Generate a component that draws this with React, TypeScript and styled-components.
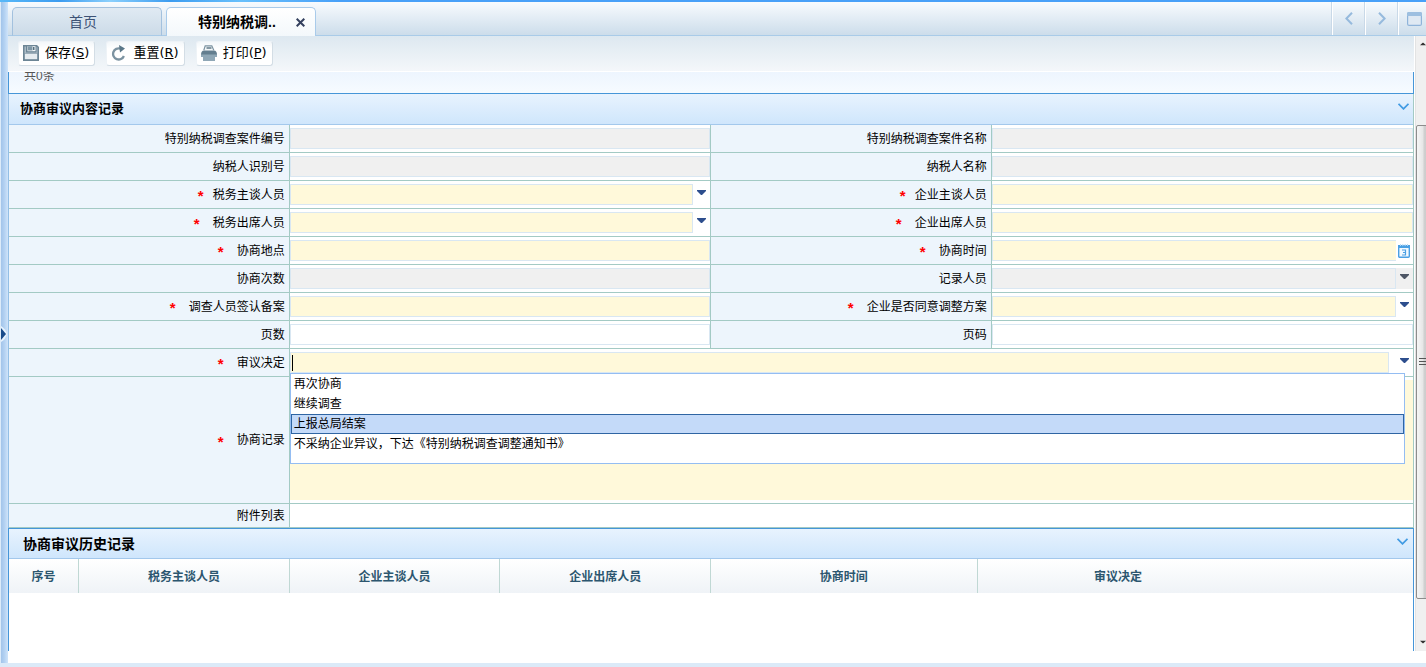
import React, { useState } from "react";
import styled, { createGlobalStyle, css } from "styled-components";

const GlobalStyle = createGlobalStyle`
  *, *::before, *::after { box-sizing: border-box; }
  body {
    margin: 0;
    background: #fff;
    color: #000;
    font: 12px/20px "Liberation Sans", "Noto Sans CJK SC", sans-serif;
  }
  button, input, select, textarea { font: inherit; color: inherit; margin: 0; padding: 0; }
`;

const line = "#a3cac4";
const blue = "#4696d8";

const Shell = styled.div`
  display: flex;
  flex-direction: column;
  min-height: 100vh;
  overflow: hidden;
`;

const TopStrip = styled.div`
  height: 2px;
  flex: none;
  background: linear-gradient(90deg, #58b8f8 0, #3c9cf0 60px, #8cd0fc 110px, #3c9cf0 170px, #68c0fc 240px, #48a0f8 340px, #48a0f8 100%);
`;

const Middle = styled.div`
  display: flex;
  flex: 1;
`;

const Splitter = styled.div`
  display: flex;
  align-items: center;
  width: 8px;
  flex: none;
  padding-top: 2px;
  border-left: 1px solid #dcebf9;
  background: linear-gradient(90deg, #a2c4ea, #b4d2f2 50%, #cfe4fa);
`;

const SplitterHandle = styled.button`
  display: flex;
  width: 6px;
  height: 16px;
  border: 0;
  background: none;
`;

const Main = styled.div`
  flex: 1;
  min-width: 0;
  display: flex;
  flex-direction: column;
`;

const TabBar = styled.header`
  display: flex;
  justify-content: space-between;
  height: 34px;
  background: linear-gradient(#f8fbfe, #cbdcea);
  box-shadow: inset 0 -1px #a9cbe8;
`;

const Tabs = styled.nav`
  display: flex;
  gap: 4px;
  padding: 5px 0 0 4px;
`;

const Tab = styled.div<{ $active?: boolean }>`
  display: flex;
  align-items: center;
  justify-content: space-between;
  width: 150px;
  height: 29px;
  padding: 0 10px 0 ${(p) => (p.$active ? 31 : 56)}px;
  border: 1px solid ${(p) => (p.$active ? "#a9cbea" : "#a3c1de")};
  border-bottom: ${(p) => (p.$active ? "0" : "1px solid #a9cbe8")};
  border-radius: 5px 5px 0 0;
  background: ${(p) => (p.$active ? "linear-gradient(#fff, #f3f8fb)" : "linear-gradient(#e0eaf3, #ccdbe8)")};
`;

const TabLink = styled.a<{ $active?: boolean }>`
  font-size: 14px;
  font-weight: ${(p) => (p.$active ? 700 : 400)};
  color: ${(p) => (p.$active ? "#000" : "#3d5275")};
  text-decoration: none;
  white-space: nowrap;
`;

const IconButton = styled.button`
  display: flex;
  border: 0;
  background: none;
`;

const TabNav = styled.div`
  display: flex;
`;

const NavButton = styled.button<{ $last?: boolean }>`
  display: flex;
  align-items: center;
  padding-left: ${(p) => (p.$last ? 8 : 12)}px;
  width: ${(p) => (p.$last ? 28 : 33)}px;
  height: 33px;
  border: 0;
  border-left: 1px solid #fff;
  background: none;
  box-shadow: -1px 0 #c9d9e8;
`;

const Workspace = styled.div`
  display: flex;
  flex: 1;
  padding-bottom: 12px;
`;

const Content = styled.main`
  flex: 1;
  min-width: 0;
  margin-right: 1px;
  display: flex;
  flex-direction: column;
`;

const Toolbar = styled.div`
  display: flex;
  align-items: flex-start;
  gap: 11px;
  height: 36px;
  padding: 5px 10px 0;
  border-bottom: 1px solid #fff;
  background: linear-gradient(#dde8f0, #f4f7fa);
`;

const ToolButton = styled.button`
  display: flex;
  align-items: center;
  gap: 6px;
  height: 25px;
  padding: 0 5px 1px 4px;
  border: 1px solid #eef3f7;
  border-right-color: #d3dde5;
  border-bottom-color: #d3dde5;
  border-radius: 3px;
  background: linear-gradient(#f3f7fa, #fff 30%);
  font: 13px/20px "DejaVu Sans", "Noto Sans CJK SC", sans-serif;
  white-space: nowrap;
`;

const Pager = styled.div`
  height: 22px;
  overflow: hidden;
  padding-left: 15px;
  border: solid ${blue};
  border-width: 0 1px 1px;
  background: linear-gradient(#edf5fe, #f7fbff);
  color: #555;
  line-height: 8px;
`;

const Panel = styled.section<{ $grow?: boolean }>`
  border: solid ${(p) => (p.$grow ? blue : line)};
  border-width: ${(p) => (p.$grow ? "1px 1px 0" : "0 1px")};
  border-left-color: ${(p) => (p.$grow ? blue : "#93bfe6")};
  ${(p) => p.$grow && css`flex: 1; min-height: 123px;`}
`;

const PanelHead = styled.div<{ $history?: boolean }>`
  display: flex;
  align-items: center;
  justify-content: space-between;
  height: ${(p) => (p.$history ? 30 : 31)}px;
  padding: 0 ${(p) => (p.$history ? "5px 0 14px" : "4px 0 11px")};
  border-bottom: 1px solid #a3c8ec;
  background: linear-gradient(#e8f3fe, #cfe6fc);
`;

const PanelTitle = styled.h2<{ $large?: boolean }>`
  margin: 0;
  font-size: ${(p) => (p.$large ? 14 : 13)}px;
  line-height: 20px;
`;

const CollapseButton = styled(IconButton)`
  padding-bottom: 5px;
`;

const Row = styled.div<{ $wide?: boolean; $size?: "tall" | "short" }>`
  display: grid;
  grid-template-columns: ${(p) => (p.$wide ? "20% 80%" : "20% 30% 20% 30%")};
  grid-template-rows: 100%;
  height: ${(p) => (p.$size === "tall" ? 127 : p.$size === "short" ? 24 : 28)}px;
  border-bottom: 1px solid ${line};
`;

const LabelCell = styled.label`
  display: flex;
  align-items: center;
  justify-content: flex-end;
  padding-right: 4px;
  border-right: 1px solid ${line};
  background: #edf5fc;
  white-space: nowrap;
`;

const Star = styled.span<{ $tight?: boolean }>`
  width: 7px;
  margin-right: ${(p) => (p.$tight ? 8 : 12)}px;
  padding-top: 3px;
  color: #f00;
  font: 700 15px/16px "Liberation Sans", sans-serif;
`;

const FieldCell = styled.div<{ $divider?: boolean }>`
  position: relative;
  display: flex;
  min-width: 0;
  padding: 3px 0;
  border-right: ${(p) => (p.$divider ? `1px solid ${line}` : "0")};
`;

type Tone = "gray" | "yellow" | "white";
const tones: Record<Tone, string> = { gray: "#f0f0f0", yellow: "#fff9da", white: "#fff" };

const box = css<{ $tone: Tone }>`
  flex: 1;
  min-width: 0;
  border: 1px solid #d9e7f2;
  border-radius: 0;
  outline: 0;
  background: ${(p) => tones[p.$tone]};
  line-height: 18px;
  appearance: none;
`;

const TextBox = styled.input<{ $tone: Tone; $open?: boolean }>`
  ${box}
  border-right-width: ${(p) => (p.$open ? 0 : 1)}px;
`;
const SelectBox = styled.select<{ $tone: Tone }>`
  ${box}
  opacity: 1;
`;
const NoteBox = styled.textarea`
  flex: 1;
  min-width: 0;
  border: 0;
  outline: 0;
  resize: none;
  background: ${tones.yellow};
`;

const Trigger = styled.span<{ $tone?: Tone; $wide?: boolean }>`
  display: flex;
  justify-content: flex-end;
  width: ${(p) => (p.$wide ? 24 : 17)}px;
  padding: 6px 4px 0 0;
  background: ${(p) => (p.$tone === "gray" ? tones.gray : "none")};
`;

const DateButton = styled(IconButton)`
  width: 17px;
  padding: 4px 0 0 2px;
`;

const Caret = styled.span`
  position: absolute;
  left: 2px;
  top: 6px;
  width: 1px;
  height: 16px;
  background: #000;
`;

const Options = styled.ul`
  position: absolute;
  z-index: 2;
  left: 0;
  right: 8px;
  top: 24px;
  margin: 0;
  padding: 0 0 9px;
  border: 1px solid #94bdf2;
  background: #fff;
  list-style: none;
`;

const Option = styled.li<{ $on: boolean }>`
  height: 20px;
  padding: 0 2px;
  border: 1px solid ${(p) => (p.$on ? "#2f65a3" : "transparent")};
  background: ${(p) => (p.$on ? "#c4daf9" : "#fff")};
  line-height: 18px;
`;

const History = styled.table`
  width: 100%;
  border-collapse: separate;
  border-spacing: 0;
  table-layout: fixed;
  background: linear-gradient(#fff, #eff3f7);
`;

const Th = styled.th<{ $w: number }>`
  width: ${(p) => p.$w}%;
  height: 34px;
  padding: 2px 0 0;
  border-right: 1px solid #c0d8d4;
  color: #2c566f;
  &:nth-last-child(2) { border-right: 0; }
`;

const Filler = styled.td`
  padding: 0;
`;

const Rail = styled.aside`
  display: flex;
  flex-direction: column;
  flex: none;
  width: 11px;
  overflow: hidden;
  border-left: 1px solid #e3e3e3;
  background: #f0f0f0;
`;

const RailGap = styled.div<{ $share: number }>`
  flex: ${(p) => p.$share} 0 0;
`;

const RailButton = styled(IconButton)`
  height: 17px;
  padding: 6px 0 0 4px;
`;

const Thumb = styled.div`
  display: flex;
  align-items: center;
  flex: 474 0 0;
  width: 17px;
  padding-left: 2px;
  border: 1px solid #8c8c8c;
  border-radius: 2px;
  background: linear-gradient(90deg, #f6f6f6 0, #e6e6e6 6px, #d0d0d0 7px, #c4c4c4 100%);
`;

const BottomStrip = styled.div`
  height: 4px;
  flex: none;
  background: #dbeaf8;
`;

const Down = ({ dim }: { dim?: boolean }) => (
  <svg width="9" height="5" viewBox="0 0 9 5" aria-hidden="true">
    <path d="M0 0H9V1L5 5H4L0 1Z" fill={dim ? "#4e5665" : "#2d4e8d"} />
  </svg>
);

const Collapse = ({ label }: { label: string }) => (
  <CollapseButton aria-label={label}>
    <svg width="11" height="7" viewBox="0 0 11 7" fill="none" stroke="#419be3" strokeWidth="1.8">
      <path d="M0.5 0.8L5.5 5.8L10.5 0.8" />
    </svg>
  </CollapseButton>
);

const SaveIcon = () => (
  <svg width="16" height="16" viewBox="0 0 16 16" aria-hidden="true">
    <path d="M0 0H14L16 2V16H0Z" fill="#6c8595" />
    <path d="M1.5 1.5H3V7.5H13.5V1.5L14.5 2.5V8.5H1.5Z" fill="#a9bac5" />
    <path d="M4.5 1.2H12.5V6.2H4.5Z" fill="#f4f7f9" />
    <path d="M5 1.2H9.5V5.5H5Z" fill="#7f97a6" />
    <path d="M10 2H11.5V5H10Z" fill="#56707f" />
    <path d="M1.8 8.8H14.2V14.2H1.8Z" fill="#e6ecf0" />
  </svg>
);

const ResetIcon = () => (
  <svg width="16" height="16" viewBox="0 0 16 16" aria-hidden="true">
    <path d="M9.5 3.6A5.6 5.6 0 1 0 12.9 11" fill="none" stroke="#7c93a1" strokeWidth="2.3" />
    <path d="M8 0L14 3.6L9 7.4Z" fill="#5a7788" />
  </svg>
);

const PrintIcon = () => (
  <svg width="16" height="16" viewBox="0 0 16 16" aria-hidden="true">
    <path d="M2.8 5.2L4.2 0.8H10.8L12.8 5.2" fill="#f2f6f8" stroke="#7c93a1" strokeWidth="1.2" />
    <path d="M5.5 3H10.5" stroke="#56707f" strokeWidth="1.4" />
    <path d="M0 10Q0 5.5 3 5.5H13Q16 5.5 16 10Z" fill="#637e8f" />
    <path d="M0 9.5H16V12H14V16H2V12H0Z" fill="#8fa7b6" />
  </svg>
);

const CalendarIcon = () => (
  <svg width="12" height="14" viewBox="0 0 12 14" aria-hidden="true">
    <rect x="0.7" y="1.7" width="10.6" height="11.6" rx="1" fill="#f2f9ff" stroke="#4aa0e4" strokeWidth="1.4" />
    <path d="M0 1H12V4H0Z" fill="#4aa0e4" />
    <path d="M2.5 0V2M4.8 0V2M7.2 0V2M9.5 0V2" stroke="#b8daf5" />
    <path d="M4 6H7.5V11H4M5 8.5H7.5" fill="none" stroke="#4aa0e4" strokeWidth="1.2" />
  </svg>
);

type Kind = "text" | "select" | "date";
interface Field {
  id: string;
  label: string;
  tone: Tone;
  kind?: Kind;
  star?: "tight" | "loose";
}

const rows: [Field, Field][] = [
  [{ id: "caseNo", label: "特别纳税调查案件编号", tone: "gray" }, { id: "caseName", label: "特别纳税调查案件名称", tone: "gray" }],
  [{ id: "taxNo", label: "纳税人识别号", tone: "gray" }, { id: "taxName", label: "纳税人名称", tone: "gray" }],
  [
    { id: "taxLead", label: "税务主谈人员", tone: "yellow", kind: "select", star: "tight" },
    { id: "firmLead", label: "企业主谈人员", tone: "yellow", star: "tight" },
  ],
  [
    { id: "taxStaff", label: "税务出席人员", tone: "yellow", kind: "select", star: "loose" },
    { id: "firmStaff", label: "企业出席人员", tone: "yellow", star: "loose" },
  ],
  [
    { id: "place", label: "协商地点", tone: "yellow", star: "loose" },
    { id: "time", label: "协商时间", tone: "yellow", kind: "date", star: "loose" },
  ],
  [{ id: "count", label: "协商次数", tone: "gray" }, { id: "recorder", label: "记录人员", tone: "gray", kind: "select" }],
  [
    { id: "signed", label: "调查人员签认备案", tone: "yellow", star: "loose" },
    { id: "agreed", label: "企业是否同意调整方案", tone: "yellow", kind: "select", star: "loose" },
  ],
  [{ id: "pages", label: "页数", tone: "white" }, { id: "pageNo", label: "页码", tone: "white" }],
];

const decisions = ["再次协商", "继续调查", "上报总局结案", "不采纳企业异议，下达《特别纳税调查调整通知书》"];

const columns: [string, number][] = [
  ["序号", 5],
  ["税务主谈人员", 15],
  ["企业主谈人员", 15],
  ["企业出席人员", 15],
  ["协商时间", 19],
  ["审议决定", 20],
];

const FieldPair = ({ field, divider }: { field: Field; divider?: boolean }) => {
  const { id, label, tone, kind = "text", star } = field;
  const locked = tone === "gray";
  return (
    <>
      <LabelCell htmlFor={id}>
        {star && <Star $tight={star === "tight"}>*</Star>}
        {label}
      </LabelCell>
      <FieldCell $divider={divider}>
        {kind === "select" ? (
          <>
            <SelectBox id={id} $tone={tone} disabled={locked} />
            <Trigger $tone={tone}><Down dim={locked} /></Trigger>
          </>
        ) : (
          <TextBox id={id} type="text" $tone={tone} $open={kind === "date"} readOnly={locked} />
        )}
        {kind === "date" && <DateButton aria-label="选择日期"><CalendarIcon /></DateButton>}
      </FieldCell>
    </>
  );
};

export default function App() {
  const [active, setActive] = useState(2);
  const [decision, setDecision] = useState("");

  return (
    <Shell>
      <GlobalStyle />
      <TopStrip />
      <Middle>
        <Splitter>
          <SplitterHandle aria-label="展开侧栏">
            <svg width="6" height="16" viewBox="0 0 6 16">
              <path d="M0 0Q5 3 6 8Q5 13 0 16Z" fill="#e6f2fd" />
              <path d="M0 2L5 8L0 14Z" fill="#174b8b" />
            </svg>
          </SplitterHandle>
        </Splitter>
        <Main>
          <TabBar>
            <Tabs>
              <Tab><TabLink href="#home">首页</TabLink></Tab>
              <Tab $active>
                <TabLink href="#case" $active>特别纳税调..</TabLink>
                <IconButton aria-label="关闭">
                  <svg width="9" height="9" viewBox="0 0 9 9" stroke="#34405e" strokeWidth="2">
                    <path d="M0.7 0.7L8.3 8.3M8.3 0.7L0.7 8.3" />
                  </svg>
                </IconButton>
              </Tab>
            </Tabs>
            <TabNav>
              <NavButton aria-label="向左">
                <svg width="8" height="13" viewBox="0 0 8 13" fill="none" stroke="#96badd" strokeWidth="2">
                  <path d="M7 0.7L1.4 6.5L7 12.3" />
                </svg>
              </NavButton>
              <NavButton aria-label="向右">
                <svg width="8" height="13" viewBox="0 0 8 13" fill="none" stroke="#96badd" strokeWidth="2">
                  <path d="M1 0.7L6.6 6.5L1 12.3" />
                </svg>
              </NavButton>
              <NavButton aria-label="最大化" $last>
                <svg width="15" height="14" viewBox="0 0 15 14">
                  <rect x="0.6" y="0.6" width="13.8" height="12.8" rx="1.5" fill="#dfe9f3" stroke="#8fb4da" strokeWidth="1.2" />
                  <path d="M0 1.5Q0 0 1.5 0H13.5Q15 0 15 1.5V4H0Z" fill="#9dbfe0" />
                </svg>
              </NavButton>
            </TabNav>
          </TabBar>

          <Workspace>
            <Content>
              <Toolbar>
                <ToolButton><SaveIcon /><span>保存(<u>S</u>)</span></ToolButton>
                <ToolButton><ResetIcon /><span>重置(<u>R</u>)</span></ToolButton>
                <ToolButton><PrintIcon /><span>打印(<u>P</u>)</span></ToolButton>
              </Toolbar>
              <Pager>共0条</Pager>

              <Panel>
                <PanelHead>
                  <PanelTitle>协商审议内容记录</PanelTitle>
                  <Collapse label="收起内容记录" />
                </PanelHead>
                {rows.map(([left, right]) => (
                  <Row key={left.id}>
                    <FieldPair field={left} divider />
                    <FieldPair field={right} />
                  </Row>
                ))}
                <Row $wide>
                  <LabelCell htmlFor="decision"><Star>*</Star>审议决定</LabelCell>
                  <FieldCell>
                    <TextBox
                      id="decision"
                      type="text"
                      role="combobox"
                      aria-expanded="true"
                      aria-controls="decisions"
                      $tone="yellow"
                      value={decision}
                      onChange={(e) => setDecision(e.target.value)}
                    />
                    <Caret />
                    <Trigger $wide><Down /></Trigger>
                    <Options id="decisions" role="listbox">
                      {decisions.map((text, i) => (
                        <Option
                          key={text}
                          role="option"
                          aria-selected={i === active}
                          $on={i === active}
                          onMouseEnter={() => setActive(i)}
                          onClick={() => setDecision(text)}
                        >
                          {text}
                        </Option>
                      ))}
                    </Options>
                  </FieldCell>
                </Row>
                <Row $wide $size="tall">
                  <LabelCell htmlFor="note"><Star>*</Star>协商记录</LabelCell>
                  <FieldCell><NoteBox id="note" /></FieldCell>
                </Row>
                <Row $wide $size="short">
                  <LabelCell as="div">附件列表</LabelCell>
                  <FieldCell />
                </Row>
              </Panel>

              <Panel $grow>
                <PanelHead $history>
                  <PanelTitle $large>协商审议历史记录</PanelTitle>
                  <Collapse label="收起历史记录" />
                </PanelHead>
                <History>
                  <thead>
                    <tr>
                      {columns.map(([name, w]) => <Th key={name} $w={w} scope="col">{name}</Th>)}
                      <Filler />
                    </tr>
                  </thead>
                </History>
              </Panel>
            </Content>

            <Rail>
              <RailButton aria-label="向上滚动">
                <svg width="9" height="4" viewBox="0 0 9 4"><path d="M0 4L4 0H5L9 4Z" fill="#333" /></svg>
              </RailButton>
              <RailGap $share={72} />
              <Thumb>
                <svg width="8" height="9" viewBox="0 0 8 9" stroke="#555"><path d="M0 1.5H8M0 4.5H8M0 7.5H8" /></svg>
              </Thumb>
              <RailGap $share={35} />
              <RailButton aria-label="向下滚动">
                <svg width="9" height="4" viewBox="0 0 9 4"><path d="M0 0H9L5 4H4Z" fill="#333" /></svg>
              </RailButton>
            </Rail>
          </Workspace>
        </Main>
      </Middle>
      <BottomStrip />
    </Shell>
  );
}
